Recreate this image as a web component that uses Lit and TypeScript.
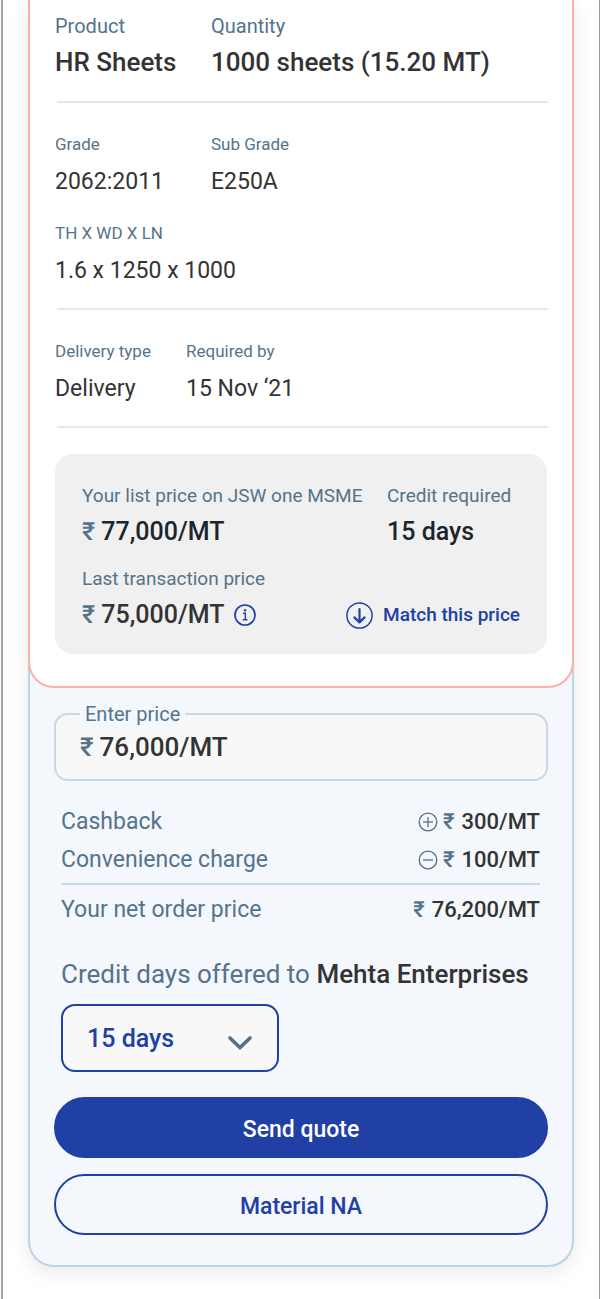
import { LitElement, html, css, svg } from "lit";
import { customElement, state } from "lit/decorators.js";

interface Fact {
  label: string;
  value: string;
}

@customElement("app-root")
export class AppRoot extends LitElement {
  @state() private price = "76,000/MT";
  @state() private creditDays = "15 days";

  static styles = css`
    :host {
      display: block;
      --ink: #333333;
      --ink-deep: #1c252c;
      --muted: #55738c;
      --brand: #2140a5;
      --panel: #f4f7fc;
      --field: #f8f8f8;
      font-family: Roboto, "Liberation Sans", sans-serif;
      color: var(--ink);
    }
    *,
    *::before,
    *::after {
      box-sizing: border-box;
    }
    .screen {
      min-height: 100vh;
      margin-left: 1px;
      padding: 0 25px 32px;
      border-left: 2px solid #a0a7ac;
      border-right: 1px solid #999999;
      background: #ffffff;
    }
    .card {
      padding-bottom: 30px;
      border: 1px solid #bbd4e6;
      border-width: 0 2px 2px;
      border-radius: 0 0 26px 26px;
      background: var(--panel);
      box-shadow: 0 6px 20px rgba(0, 0, 0, 0.09);
    }
    .enquiry {
      margin: 0 -2px;
      padding: 14px 25px 32px;
      border: 2px solid #ffadad;
      border-top: 0;
      border-radius: 0 0 26px 26px;
      background: #ffffff;
    }
    dl,
    dd,
    p {
      margin: 0;
    }
    .facts {
      display: grid;
      grid-template-columns: 156px 1fr;
      row-gap: 27px;
    }
    .facts.tight {
      grid-template-columns: 131px 1fr;
    }
    .rule {
      height: 2px;
      margin: 23px -1px 31px 2px;
      border: 0;
      background: #e0e8f0;
    }
    .rule.last {
      margin-bottom: 26px;
    }
    .fact {
      display: flex;
      flex-direction: column;
      gap: 14px;
      white-space: nowrap;
    }
    .fact dt {
      font-size: 17px;
      line-height: 20px;
      color: var(--muted);
    }
    .fact dd {
      font-size: 23px;
      line-height: 28px;
    }
    .fact.lead {
      gap: 8px;
    }
    .lead dt {
      font-size: 20px;
      line-height: 24px;
      color: var(--muted);
    }
    .lead dd {
      font-size: 26px;
      line-height: 32px;
      font-weight: 500;
    }
    .prices {
      display: grid;
      grid-template-columns: 305px 1fr;
      row-gap: 19px;
      padding: 30px 27px 23px;
      border-radius: 18px;
      background: #f0f0f0;
    }
    .prices dt {
      font-size: 19px;
    }
    .prices dd {
      font-size: 25px;
    }
    .deep dd {
      color: var(--ink-deep);
    }
    .rupee {
      color: var(--muted);
      font-weight: 500;
    }
    .wide {
      grid-column: 1 / -1;
      display: flex;
      justify-content: space-between;
      align-items: flex-end;
    }
    .amount {
      display: flex;
      align-items: center;
      gap: 10px;
    }
    svg {
      display: block;
      flex: none;
      fill: none;
      stroke: currentColor;
    }
    button {
      font-family: inherit;
      font-weight: 500;
      cursor: pointer;
    }
    .plain {
      display: flex;
      align-items: center;
      gap: 10px;
      padding: 0;
      border: 0;
      background: none;
      color: var(--brand);
      font-size: 19px;
      line-height: 32px;
    }
    .quote {
      padding: 25px 24px 0;
    }
    .field {
      position: relative;
      display: flex;
      align-items: center;
      gap: 6px;
      height: 68px;
      padding: 0 24px;
      border: 2px solid #c9d8e7;
      border-radius: 14px;
      background: var(--field);
      font-size: 26px;
    }
    .field label {
      position: absolute;
      top: -14px;
      left: 24px;
      padding: 0 5px;
      background: var(--panel);
      color: var(--muted);
      font-size: 20px;
      line-height: 26px;
    }
    .field input {
      flex: 1;
      min-width: 0;
      padding: 0;
      border: 0;
      outline: 0;
      background: none;
      color: var(--ink);
      font: inherit;
      font-weight: 500;
    }
    .summary {
      margin: 22px 8px 0 7px;
      font-size: 22px;
      line-height: 38px;
    }
    .line {
      display: flex;
      justify-content: space-between;
    }
    .line dt {
      color: var(--muted);
      font-size: 23px;
    }
    .line dd {
      display: flex;
      align-items: center;
      gap: 7px;
      font-weight: 500;
    }
    .line svg {
      margin-right: -2px;
      color: var(--muted);
    }
    .line.total {
      margin-top: 4px;
      padding-top: 6px;
      border-top: 2px solid #c5dbec;
    }
    .offer {
      display: block;
      margin: 29px 0 14px 7px;
      color: var(--muted);
      font-size: 26px;
      line-height: 32px;
    }
    .offer strong {
      color: var(--ink);
      font-weight: 500;
    }
    .picker {
      position: relative;
      width: 218px;
      margin-left: 7px;
      color: var(--muted);
    }
    .picker select {
      width: 100%;
      height: 68px;
      padding: 0 24px;
      border: 2px solid var(--brand);
      border-radius: 14px;
      appearance: none;
      background: var(--field);
      color: var(--brand);
      font-family: inherit;
      font-size: 25px;
      font-weight: 500;
    }
    .picker svg {
      position: absolute;
      top: 31px;
      right: 26px;
      pointer-events: none;
    }
    .actions {
      display: grid;
      gap: 16px;
      margin-top: 25px;
    }
    .action {
      height: 61px;
      padding: 3px 0 0;
      border: 2px solid var(--brand);
      border-radius: 31px;
      background: transparent;
      color: var(--brand);
      font-size: 23px;
    }
    .action.primary {
      background: var(--brand);
      color: #ffffff;
    }
  `;

  private fact(f: Fact) {
    return html`<div class="fact"><dt>${f.label}</dt><dd>${f.value}</dd></div>`;
  }

  private lead(f: Fact) {
    return html`<div class="fact lead"><dt>${f.label}</dt><dd>${f.value}</dd></div>`;
  }

  private sign(plus: boolean) {
    return html`<svg width="20" height="20" viewBox="0 0 20 20" stroke-width="1.3" aria-hidden="true">
      <circle cx="10" cy="10" r="8.8" />
      <path d="M5 10h10" />
      ${plus ? svg`<path d="M10 5v10" />` : null}
    </svg>`;
  }

  render() {
    return html`
      <main class="screen">
        <article class="card">
          <section class="enquiry">
            <dl class="facts">
              ${this.lead({ label: "Product", value: "HR Sheets" })}
              ${this.lead({ label: "Quantity", value: "1000 sheets (15.20 MT)" })}
            </dl>
            <hr class="rule" />
            <dl class="facts">
              ${this.fact({ label: "Grade", value: "2062:2011" })}
              ${this.fact({ label: "Sub Grade", value: "E250A" })}
              ${this.fact({ label: "TH X WD X LN", value: "1.6 x 1250 x 1000" })}
            </dl>
            <hr class="rule" />
            <dl class="facts tight">
              ${this.fact({ label: "Delivery type", value: "Delivery" })}
              ${this.fact({ label: "Required by", value: "15 Nov ‘21" })}
            </dl>
            <hr class="rule last" />
            <div class="prices">
              <dl class="fact lead deep">
                <dt>Your list price on JSW one MSME</dt>
                <dd><span class="rupee">₹</span> 77,000/MT</dd>
              </dl>
              <dl class="fact lead deep">
                <dt>Credit required</dt>
                <dd>15 days</dd>
              </dl>
              <div class="wide">
                <dl class="fact lead">
                  <dt>Last transaction price</dt>
                  <dd class="amount">
                    <span><span class="rupee">₹</span> 75,000/MT</span>
                    <button class="plain" aria-label="About the last transaction price">
                      <svg width="22" height="22" viewBox="0 0 22 22" stroke-width="1.7">
                        <circle cx="11" cy="11" r="10" />
                        <path d="M9 9.2h2.3v6.2M8.8 15.8h4.6" stroke-width="1.4" />
                        <circle cx="11" cy="6.2" r="1.2" fill="currentColor" stroke="none" />
                      </svg>
                    </button>
                  </dd>
                </dl>
                <button class="plain">
                  <svg width="27" height="27" viewBox="0 0 27 27" aria-hidden="true">
                    <circle cx="13.5" cy="13.5" r="12.6" stroke-width="1.5" />
                    <path
                      d="M13.5 7v13M8.4 15.4l5.1 5 5.1-5"
                      stroke-width="2.2"
                      stroke-linecap="round"
                      stroke-linejoin="round"
                    />
                  </svg>
                  Match this price
                </button>
              </div>
            </div>
          </section>

          <form class="quote" @submit=${(e: Event) => e.preventDefault()}>
            <div class="field">
              <label for="price">Enter price</label>
              <span class="rupee">₹</span>
              <input
                id="price"
                .value=${this.price}
                @input=${(e: Event) => (this.price = (e.target as HTMLInputElement).value)}
              />
            </div>
            <dl class="summary">
              <div class="line">
                <dt>Cashback</dt>
                <dd>${this.sign(true)}<span class="rupee">₹</span><span>300/MT</span></dd>
              </div>
              <div class="line">
                <dt>Convenience charge</dt>
                <dd>${this.sign(false)}<span class="rupee">₹</span><span>100/MT</span></dd>
              </div>
              <div class="line total">
                <dt>Your net order price</dt>
                <dd><span class="rupee">₹</span><span>76,200/MT</span></dd>
              </div>
            </dl>
            <label class="offer" for="days">Credit days offered to <strong>Mehta Enterprises</strong></label>
            <div class="picker">
              <select
                id="days"
                .value=${this.creditDays}
                @change=${(e: Event) => (this.creditDays = (e.target as HTMLSelectElement).value)}
              >
                <option>15 days</option>
                <option>30 days</option>
                <option>45 days</option>
              </select>
              <svg width="26" height="16" viewBox="0 0 26 16" aria-hidden="true">
                <path d="M3 3l10 9.6L23 3" stroke-width="3.6" stroke-linecap="round" stroke-linejoin="round" />
              </svg>
            </div>
            <div class="actions">
              <button class="action primary" type="submit">Send quote</button>
              <button class="action" type="button">Material NA</button>
            </div>
          </form>
        </article>
      </main>
    `;
  }
}
